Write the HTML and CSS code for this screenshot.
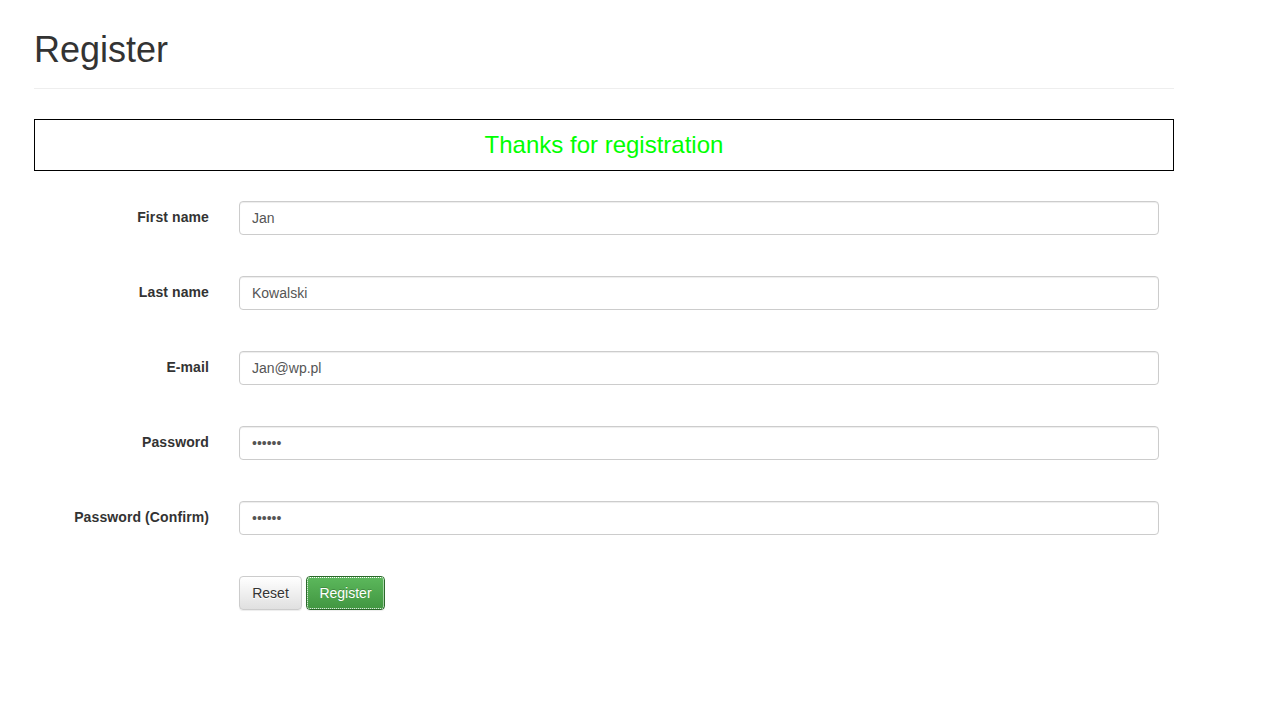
FILE: index.html
```html
<!DOCTYPE html>
<html>
<head>
<meta charset="utf-8">
<title>Register</title>
<link rel="stylesheet" href="styles.css">
</head>
<body>
<div class="container">
  <div class="page-header">
    <h1>Register</h1>
  </div>
  <div class="message">Thanks for registration</div>
  <form class="form">
    <div class="form-row">
      <label class="label">First name</label>
      <input class="input" type="text" value="Jan">
    </div>
    <div class="form-row">
      <label class="label">Last name</label>
      <input class="input" type="text" value="Kowalski">
    </div>
    <div class="form-row">
      <label class="label">E-mail</label>
      <input class="input" type="text" value="Jan@wp.pl">
    </div>
    <div class="form-row">
      <label class="label">Password</label>
      <input class="input" type="password" value="123456">
    </div>
    <div class="form-row">
      <label class="label">Password (Confirm)</label>
      <input class="input" type="password" value="123456">
    </div>
    <div class="form-row">
      <span></span>
      <div class="buttons">
        <button type="button" class="btn btn-default">Reset</button>
        <button type="button" class="btn btn-success">Register</button>
      </div>
    </div>
  </form>
</div>
</body>
</html>
```
FILE: styles.css
```css
html, body {
  margin: 0;
  padding: 0;
  background: #fff;
}
body {
  font-family: "Liberation Sans", Arial, Helvetica, sans-serif;
  font-size: 14px;
  line-height: 1.42857;
  color: #333;
}
.container {
  width: 1140px;
  padding: 0 34px;
}
.page-header {
  padding-top: 30px;
  padding-bottom: 18px;
  border-bottom: 1px solid #eee;
}
.page-header h1 {
  margin: 0;
  font-size: 36px;
  font-weight: 500;
  line-height: 39.6px;
  color: #333;
}
.message {
  margin-top: 30px;
  border: 1px solid #000;
  height: 50px;
  line-height: 50px;
  text-align: center;
  font-size: 24px;
  color: #00ff00;
}
.form {
  margin-top: 30px;
}
.form-row {
  display: grid;
  grid-template-columns: 175px 920px;
  column-gap: 30px;
  margin-bottom: 41px;
}
.label {
  text-align: right;
  font-weight: bold;
  padding-top: 6px;
  line-height: 20px;
  letter-spacing: 0.1px;
}
.input {
  box-sizing: border-box;
  width: 920px;
  height: 34px;
  padding: 6px 12px;
  font-family: "Liberation Sans", Arial, Helvetica, sans-serif;
  font-size: 14px;
  line-height: 20px;
  color: #555;
  background: #fff;
  border: 1px solid #ccc;
  border-radius: 4px;
  box-shadow: inset 0 1px 1px rgba(0,0,0,.075);
  margin: 0;
}
.buttons {
  display: flex;
  gap: 4px;
}
.btn {
  box-sizing: border-box;
  height: 34px;
  padding: 6px 12px;
  font-family: "Liberation Sans", Arial, Helvetica, sans-serif;
  font-size: 14px;
  line-height: 20px;
  border-radius: 4px;
  border: 1px solid #ccc;
  margin: 0;
  cursor: pointer;
}
.btn-default {
  width: 63px;
  color: #333;
  background: linear-gradient(to bottom, #fff 0%, #e0e0e0 100%);
  border-color: #ccc;
  box-shadow: inset 0 1px 0 rgba(255,255,255,.15), 0 1px 1px rgba(0,0,0,.075);
  text-shadow: 0 1px 0 #fff;
}
.btn-success {
  width: 79px;
  color: #fff;
  background: linear-gradient(to bottom, #5cb85c 0%, #419641 100%);
  border-color: #2b6a2b;
  outline: 1px dotted #fff;
  outline-offset: -2px;
  box-shadow: inset 0 1px 0 rgba(255,255,255,.15), 0 1px 1px rgba(0,0,0,.075);
  text-shadow: 0 -1px 0 rgba(0,0,0,.2);
}
```
